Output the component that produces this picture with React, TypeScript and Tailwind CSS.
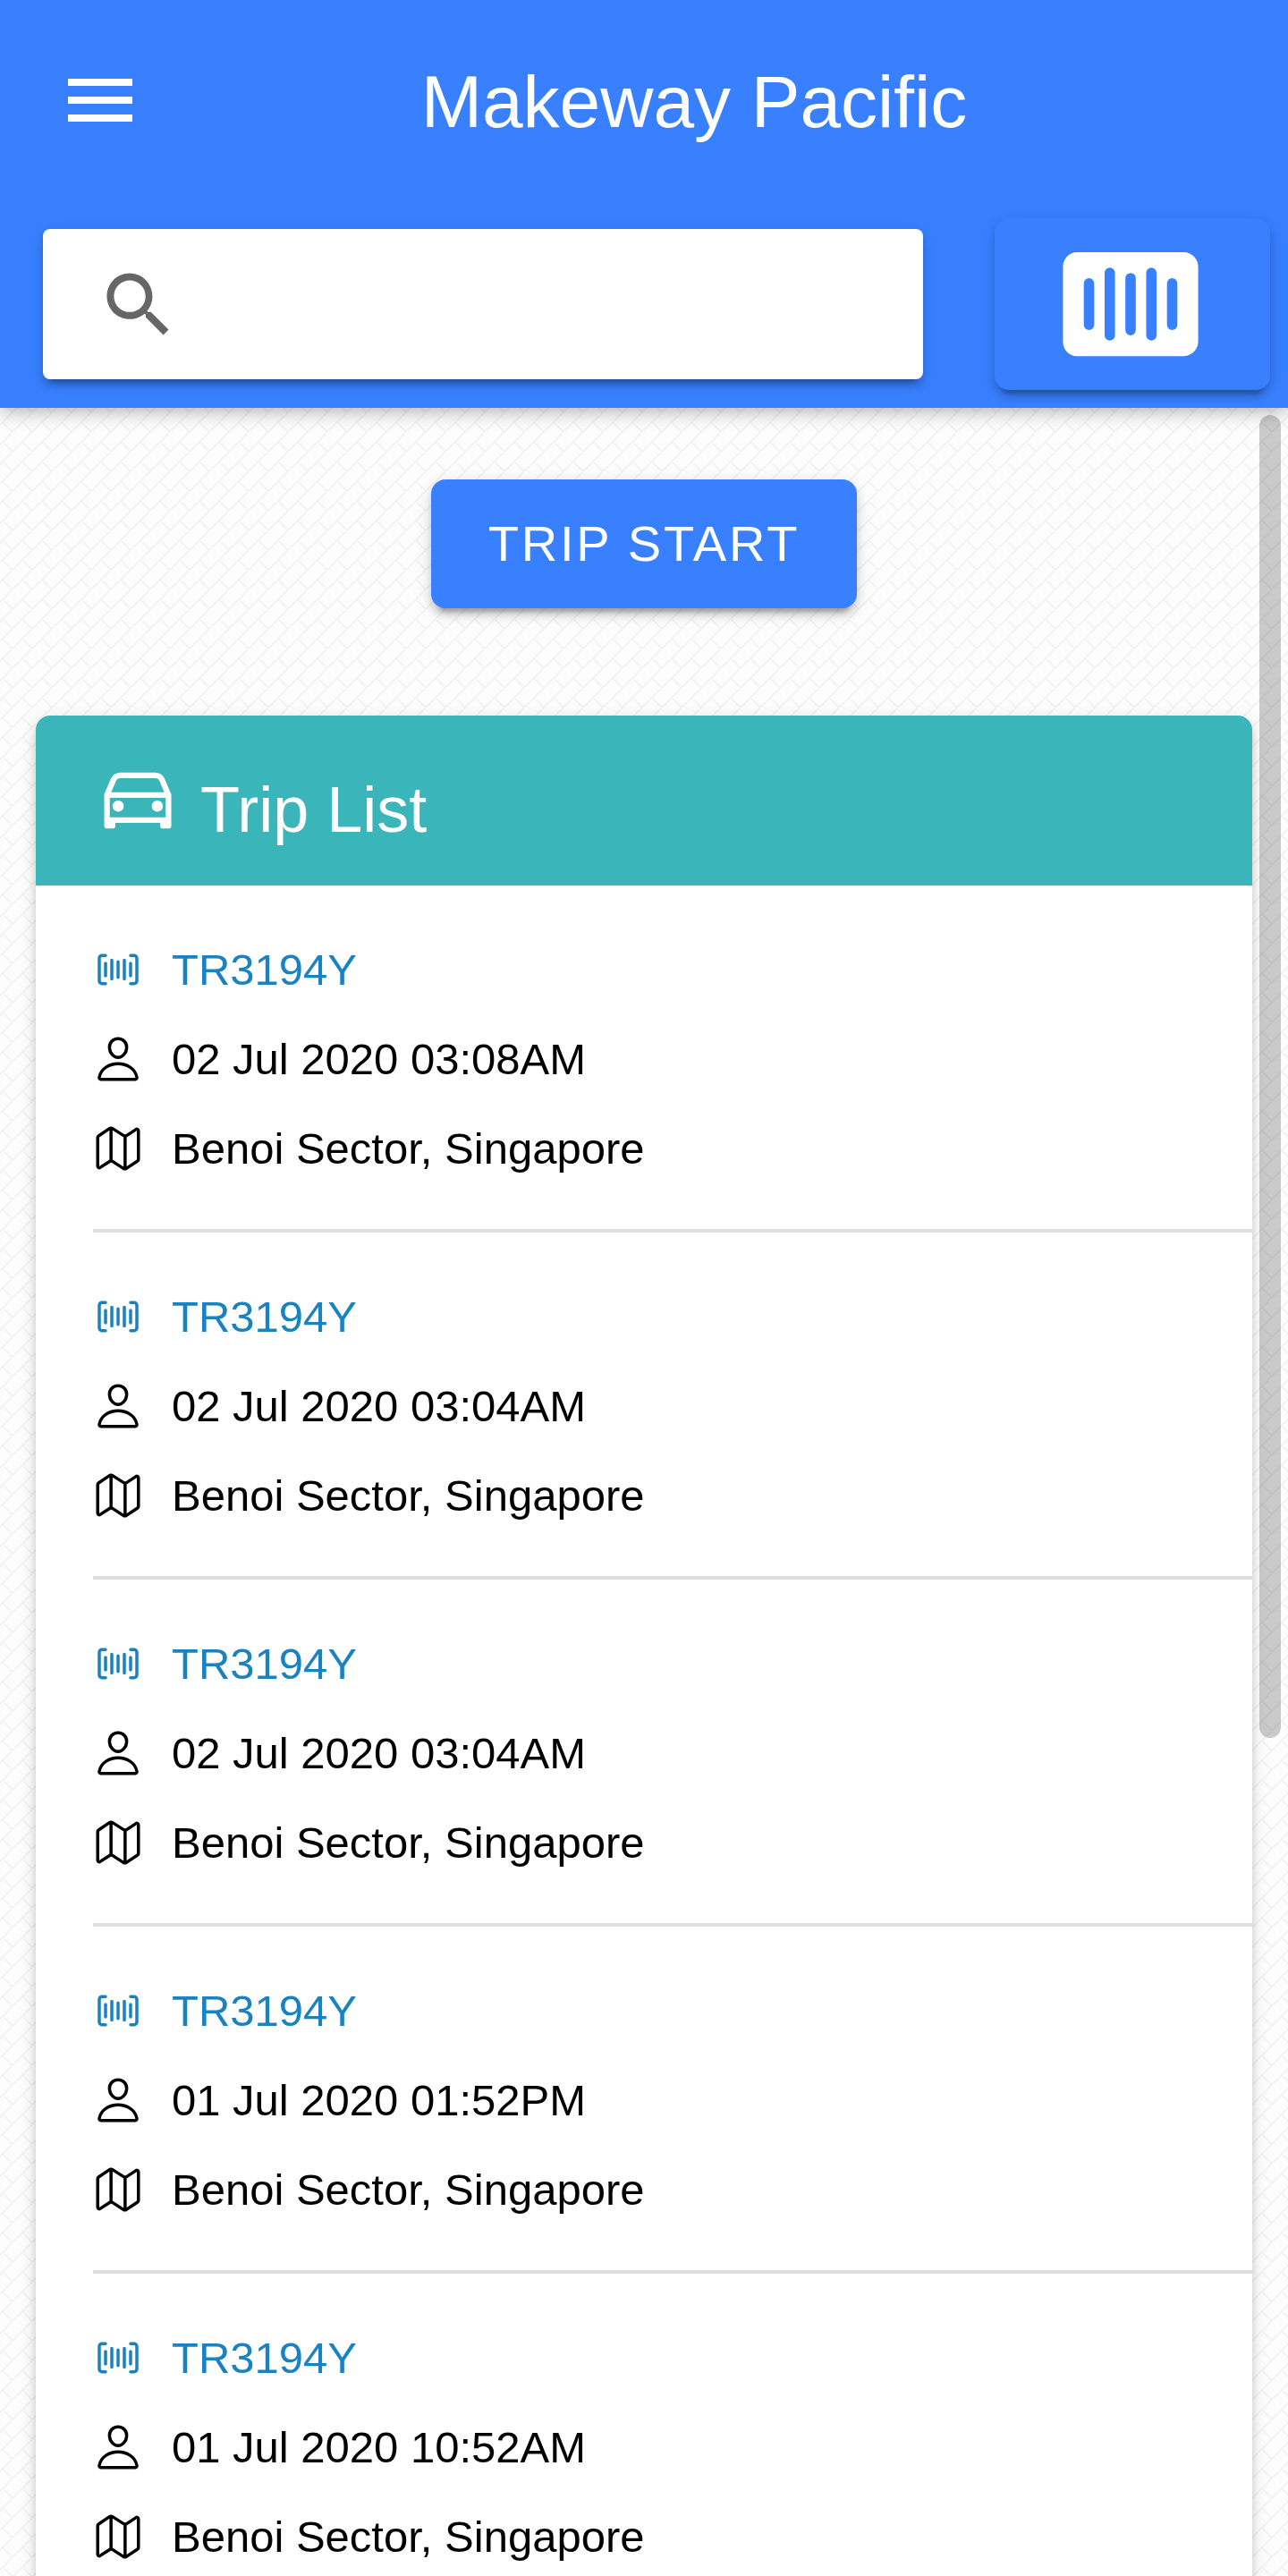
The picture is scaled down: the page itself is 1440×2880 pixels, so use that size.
import { useState } from 'react'

import {
  IoBarcode,
  IoBarcodeOutline,
  IoCarOutline,
  IoMapOutline,
  IoPersonOutline,
} from 'react-icons/io5'
import { MdMenu } from 'react-icons/md'

type Trip = {
  id: number
  vehicle: string
  time: string
  location: string
}

const TRIPS: Trip[] = [
  { id: 1, vehicle: 'TR3194Y', time: '02 Jul 2020 03:08AM', location: 'Benoi Sector, Singapore' },
  { id: 2, vehicle: 'TR3194Y', time: '02 Jul 2020 03:04AM', location: 'Benoi Sector, Singapore' },
  { id: 3, vehicle: 'TR3194Y', time: '02 Jul 2020 03:04AM', location: 'Benoi Sector, Singapore' },
  { id: 4, vehicle: 'TR3194Y', time: '01 Jul 2020 01:52PM', location: 'Benoi Sector, Singapore' },
  { id: 5, vehicle: 'TR3194Y', time: '01 Jul 2020 10:52AM', location: 'Benoi Sector, Singapore' },
]

function SearchIcon() {
  return (
    <svg viewBox="0 0 512 512" fill="currentColor" aria-hidden="true" className="size-[92px] shrink-0 text-[#666666]">
      <path
        fillRule="evenodd"
        d="M337.509 305.372h-17.501l-6.571-5.486c20.791-25.181 33.922-57.954 33.922-93.257C347.358 127.632 283.896 64 205.135 64C127.452 64 64 127.632 64 206.629s63.452 142.628 142.225 142.628c35.011 0 67.831-13.167 92.991-34.008l6.561 5.487v17.551L415.18 448L448 415.086L337.509 305.372zM206.225 305.372c-54.702 0-98.463-43.887-98.463-98.743c0-54.858 43.761-98.742 98.463-98.742c54.7 0 98.462 43.884 98.462 98.742C304.687 261.485 260.925 305.372 206.225 305.372z"
      />
    </svg>
  )
}

function Toolbar() {
  const [query, setQuery] = useState('')

  return (
    <header className="relative z-10 shrink-0 bg-[#3880ff] text-white shadow-[0_4px_20px_rgba(0,0,0,0.3)]">
      <div className="flex h-56 items-center pl-16 pr-12">
        <button type="button" aria-label="Menu" className="size-24">
          <MdMenu className="size-24" />
        </button>
        <h1 className="flex-1 pt-1 text-center text-[82px] leading-none">Makeway Pacific</h1>
      </div>
      <div className="flex h-[232px] items-center gap-20 pl-12 pr-5">
        <label className="flex h-[168px] min-w-0 flex-1 items-center gap-4 rounded-lg bg-white pl-[60px] pr-8 shadow-[0_12px_4px_-8px_rgba(0,0,0,0.2),0_8px_8px_rgba(0,0,0,0.14),0_4px_20px_rgba(0,0,0,0.12)]">
          <SearchIcon />
          <input
            type="search"
            aria-label="Search"
            value={query}
            onChange={(e) => setQuery(e.target.value)}
            className="h-full min-w-0 flex-1 bg-transparent text-[56px] text-black outline-none"
          />
        </label>
        <button
          type="button"
          aria-label="Scan barcode"
          className="flex h-48 w-[308px] items-center justify-center rounded-2xl bg-[#3880ff] pr-1 shadow-[0_12px_4px_-8px_rgba(0,0,0,0.2),0_8px_8px_rgba(0,0,0,0.14),0_4px_20px_rgba(0,0,0,0.12)]"
        >
          <IoBarcode className="size-[186px]" />
        </button>
      </div>
    </header>
  )
}

function TripItem({ trip }: { trip: Trip }) {
  return (
    <li className="ml-16 border-b-4 border-[#dddddd] pb-10 pt-11 text-[49px] leading-[100px] text-black">
      <a href="#trip" className="flex items-center gap-8 text-[#1a82c0]">
        <IoBarcodeOutline className="size-14" />
        {trip.vehicle}
      </a>
      <p className="flex items-center gap-8">
        <IoPersonOutline className="size-14" />
        {trip.time}
      </p>
      <p className="flex items-center gap-8">
        <IoMapOutline className="size-14" />
        {trip.location}
      </p>
    </li>
  )
}

export default function App() {
  return (
    <div className="flex h-screen flex-col overflow-hidden bg-[#fdfdfd] font-['Liberation_Sans',Arial,sans-serif]">
      <Toolbar />
      {/* Woven brick texture, one 22px tile */}
      <div className="relative min-h-0 flex-1 bg-[url('data:image/svg+xml,%3Csvg%20xmlns=%22http://www.w3.org/2000/svg%22%20width=%2222%22%20height=%2222%22%3E%3Cpath%20d=%22M-2%2024L24-2M11%2011L22%2022%22%20stroke=%22%23f2f2f2%22%20stroke-width=%221.6%22/%3E%3C/svg%3E')] bg-[position:-8px_5px]">
        <main className="h-full overflow-y-auto [scrollbar-width:none]">
          <div className="flex justify-center pb-[120px] pt-20">
            <button
              type="button"
              className="h-36 w-[476px] rounded-2xl bg-[#3880ff] text-[56px] tracking-wider text-white shadow-[0_12px_4px_-8px_rgba(0,0,0,0.2),0_8px_8px_rgba(0,0,0,0.14),0_4px_20px_rgba(0,0,0,0.12)]"
            >
              TRIP START
            </button>
          </div>
          <section className="mx-10 overflow-hidden rounded-2xl bg-white shadow-[0_8px_8px_rgba(0,0,0,0.14),0_4px_20px_rgba(0,0,0,0.12)]">
            <div className="flex h-[190px] items-center gap-5 bg-[#3ab5ba] pl-16 text-white">
              <IoCarOutline className="size-[100px]" />
              <h2 className="pt-5 text-[72px] leading-none">Trip List</h2>
            </div>
            <ul>
              {TRIPS.map((trip) => (
                <TripItem key={trip.id} trip={trip} />
              ))}
            </ul>
          </section>
        </main>
        {/* Scroll thumb */}
        <div className="absolute right-2 top-2 h-[61%] w-6 rounded-full bg-black/20" />
      </div>
    </div>
  )
}
